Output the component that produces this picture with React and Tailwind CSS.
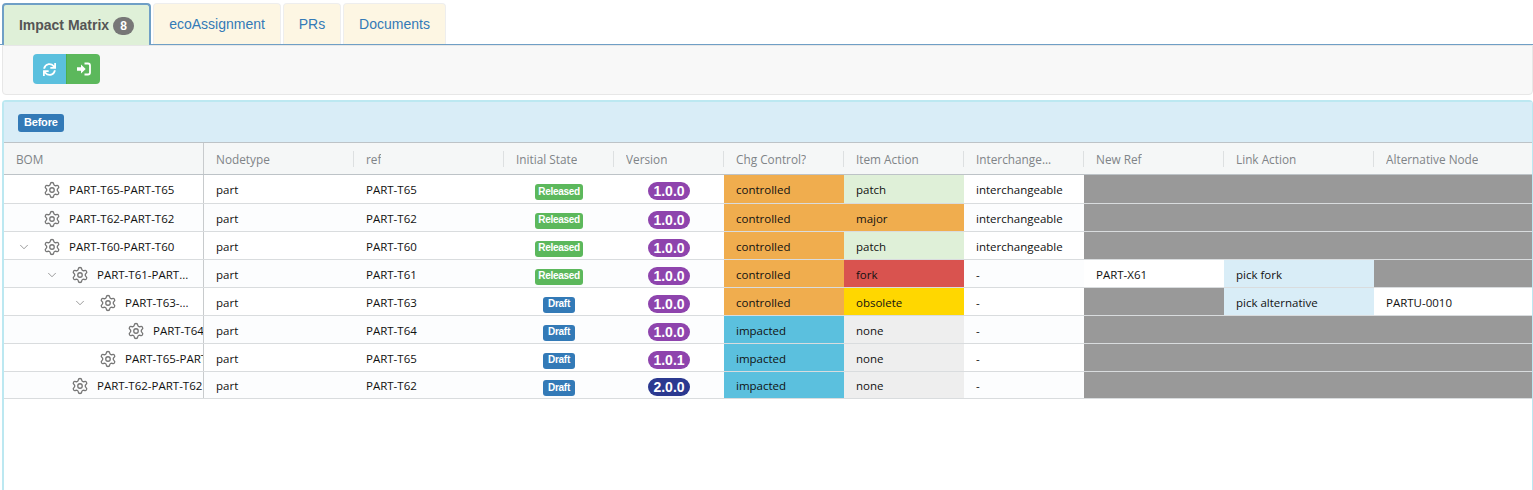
import { ChevronDown, Settings } from 'lucide-react';
import { FaSync } from 'react-icons/fa';

const GRID = 'grid grid-cols-[200px_150px_150px_110px_110px_120px_120px_120px_140px_150px_1fr]';

const columns = ['BOM', 'Nodetype', 'ref', 'Initial State', 'Version', 'Chg Control?', 'Item Action', 'Interchange...', 'New Ref', 'Link Action', 'Alternative Node'];

const actionColors = {
  patch: 'bg-[#dff0d8]',
  major: 'bg-[#f0ad4e]',
  fork: 'bg-[#d9534f]',
  obsolete: 'bg-[#ffd700]',
  none: 'bg-[#eeeeee]',
};

const rows = [
  { level: 0, name: 'PART-T65-PART-T65', ref: 'PART-T65', state: 'Released', version: '1.0.0', chg: 'controlled', action: 'patch', inter: 'interchangeable', h: 'h-[29px]' },
  { level: 0, name: 'PART-T62-PART-T62', ref: 'PART-T62', state: 'Released', version: '1.0.0', chg: 'controlled', action: 'major', inter: 'interchangeable' },
  { level: 0, open: true, name: 'PART-T60-PART-T60', ref: 'PART-T60', state: 'Released', version: '1.0.0', chg: 'controlled', action: 'patch', inter: 'interchangeable' },
  { level: 1, open: true, name: 'PART-T61-PART...', ref: 'PART-T61', state: 'Released', version: '1.0.0', chg: 'controlled', action: 'fork', inter: '-', newRef: 'PART-X61', link: 'pick fork' },
  { level: 2, open: true, name: 'PART-T63-...', ref: 'PART-T63', state: 'Draft', version: '1.0.0', chg: 'controlled', action: 'obsolete', inter: '-', link: 'pick alternative', alt: 'PARTU-0010' },
  { level: 3, name: 'PART-T64-PART-T64', ref: 'PART-T64', state: 'Draft', version: '1.0.0', chg: 'impacted', action: 'none', inter: '-' },
  { level: 2, name: 'PART-T65-PART-T65', ref: 'PART-T65', state: 'Draft', version: '1.0.1', chg: 'impacted', action: 'none', inter: '-' },
  { level: 1, name: 'PART-T62-PART-T62', ref: 'PART-T62', state: 'Draft', version: '2.0.0', chg: 'impacted', action: 'none', inter: '-', h: 'h-[27px]' },
];

const indents = ['pl-[13px]', 'pl-[41px]', 'pl-[69px]', 'pl-[97px]'];

function Tab({ children, active, width }) {
  if (active) {
    return (
      <div className={`${width} h-[42px] -mb-px flex items-center justify-center gap-[4px] rounded-t border-2 border-b-0 border-[#6f9fc6] bg-[#dff0d8] font-bold text-[#555555]`}>
        {children}
      </div>
    );
  }
  return (
    <div className={`${width} h-[41px] flex items-center justify-center rounded-t border border-b-0 border-[#eeeeee] bg-[#fdf6e3] text-[#337ab7]`}>
      {children}
    </div>
  );
}

function Cell({ children, className = '' }) {
  return <div className={`flex items-center pl-3 pt-[3px] overflow-hidden whitespace-nowrap ${className}`}>{children}</div>;
}

function Blank({ value, bg = 'bg-white' }) {
  return value ? <Cell className={bg}>{value}</Cell> : <div className="bg-[#999999]" />;
}

// fa-sign-in from the old font set: chunky arrow going into an open bracket
function SignInIcon() {
  return (
    <svg width="14" height="14" viewBox="0 0 14 14" fill="none">
      <path d="M0 5.3h4V2.6L8.7 7 4 11.4V8.7H0z" fill="white" />
      <path d="M7.5 1.5h3.5a2 2 0 0 1 2 2v7a2 2 0 0 1-2 2H7.5" stroke="white" strokeWidth="1.8" />
    </svg>
  );
}

function Row({ row, index }) {
  const striped = index % 2 === 1 ? 'bg-[#fcfdfe]' : 'bg-white';
  return (
    <div className={`${GRID} ${row.h || 'h-[28px]'} border-b border-[#d9dcde] ${striped} text-[#111111]`}>
      <div className={`flex items-center border-r border-[#c8cbcd] overflow-hidden whitespace-nowrap ${indents[row.level]}`}>
        <span className="w-[14px] mr-[12px] mt-[2px] shrink-0 flex justify-center">
          {row.open && <ChevronDown size={14} strokeWidth={1} className="text-[#555555]" />}
        </span>
        <Settings size={18} strokeWidth={1.75} className="text-[#777777] shrink-0 mr-[8px] mt-[2px]" />
        <span className="pt-[3px]">{row.name}</span>
      </div>
      <Cell>part</Cell>
      <Cell>{row.ref}</Cell>
      <div className="flex items-center justify-center pt-[6px]">
        <span className={`h-4 flex items-center rounded-[3px] font-['Liberation_Sans',sans-serif] text-[10px] tracking-[-0.3px] font-bold text-white ${row.state === 'Draft' ? 'px-[5px] bg-[#337ab7]' : 'px-[3px] bg-[#5cb85c]'}`}>
          {row.state}
        </span>
      </div>
      <div className="flex items-center justify-center pt-1">
        <span className={`w-[42px] h-[18px] flex items-center justify-center rounded-full font-['Liberation_Sans',sans-serif] text-[14px] font-bold text-white ${row.version === '2.0.0' ? 'bg-[#2b3990]' : 'bg-[#8e44ad]'}`}>
          {row.version}
        </span>
      </div>
      <Cell className={row.chg === 'controlled' ? 'bg-[#f0ad4e]' : 'bg-[#5bc0de]'}>{row.chg}</Cell>
      <Cell className={actionColors[row.action]}>{row.action}</Cell>
      <Cell>{row.inter}</Cell>
      <Blank value={row.newRef} />
      <Blank value={row.link} bg="bg-[#d9edf7]" />
      <Blank value={row.alt} />
    </div>
  );
}

export default function App() {
  return (
    <div className="w-[1533px] h-[490px] overflow-hidden bg-white font-['Liberation_Sans',sans-serif] text-sm">
      <div className="h-[45px] pt-[3px] pl-[2px] flex gap-[2px] border-b border-[#6f9fc6]">
        <Tab active width="w-[149px]">
          Impact Matrix
          <span className="w-[21px] h-[18px] mt-px rounded-full bg-[#777777] text-white text-xs flex items-center justify-center">8</span>
        </Tab>
        <Tab width="w-[128px]">ecoAssignment</Tab>
        <Tab width="w-[58px]">PRs</Tab>
        <Tab width="w-[103px]">Documents</Tab>
      </div>

      <div className="h-[50px] ml-[2px] pl-[30px] pt-2 flex items-start bg-[#f8f8f8] border border-[#e7e7e7] rounded-b">
        <div className="w-[33px] h-[30px] flex items-center justify-center rounded-l bg-[#5bc0de] text-white">
          <FaSync size={13} />
        </div>
        <div className="w-[34px] h-[30px] flex items-center justify-center rounded-r bg-[#5cb85c] border-l border-[#4cae4c] text-white">
          <SignInIcon />
        </div>
      </div>

      <div className="mt-[5px] ml-[2px] h-[391px] rounded-t border-2 border-b-0 border-r border-[#bce8f1]">
        <div className="h-[40px] pl-[14px] flex items-center bg-[#d9edf7]">
          <span className="h-[18px] mt-[2px] px-[6px] flex items-center rounded-[3px] bg-[#337ab7] text-white text-[11px] tracking-[-0.2px] font-bold">Before</span>
        </div>

        <div className="font-['Open_Sans',sans-serif] text-[11.5px]">
          <div className={`${GRID} h-[33px] bg-[#f5f7f7] border-y border-y-[#bdc3c7] text-[11.8px] text-[#7f8487]`}>
            {columns.map((col, i) => (
              <div key={col} className={`flex items-center pl-3 ${i === 0 ? 'border-r border-[#c8cbcd]' : ''}`}>
                <span className="truncate pt-0.5">{col}</span>
                {i > 0 && i < columns.length - 1 && <span className="ml-auto w-px h-4 bg-[#dde0e1]" />}
              </div>
            ))}
          </div>
          {rows.map((row, i) => (
            <Row key={i} row={row} index={i} />
          ))}
        </div>
      </div>
    </div>
  );
}
